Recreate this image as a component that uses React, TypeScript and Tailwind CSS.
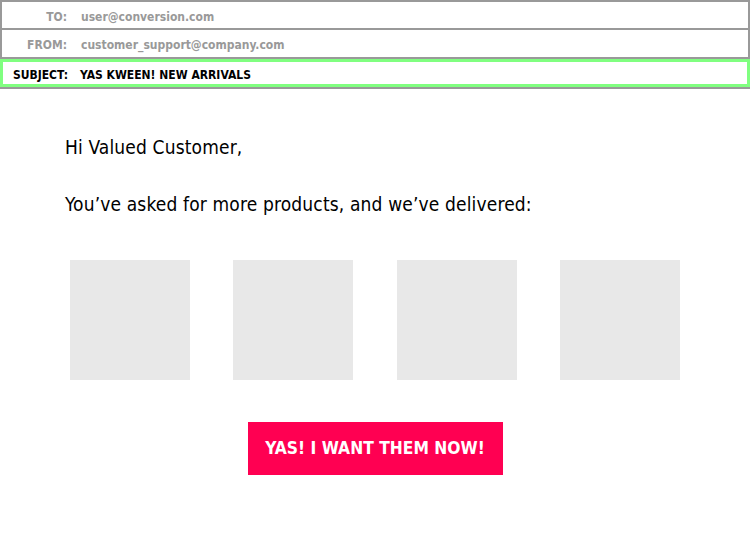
import React from "react";

const font = { fontFamily: '"DejaVu Sans Condensed", "Liberation Sans Narrow", "Liberation Sans", sans-serif' };

export default function App() {
  const products = [0, 1, 2, 3];
  return (
    <div className="w-[750px] h-[550px] bg-white overflow-hidden" style={font}>
      {/* header */}
      <div className="h-[30px] pt-[3px] border-2 border-[#999] flex items-center text-[12px] font-bold">
        <span className="w-[65px] text-right text-[#999]">TO:</span>
        <span className="ml-[14px] text-[#999]">user@conversion.com</span>
      </div>
      <div className="h-[29px] pt-[3px] border-x-2 border-b-2 border-[#999] flex items-center text-[12px] font-bold">
        <span className="w-[65px] text-right text-[#999]">FROM:</span>
        <span className="ml-[14px] text-[#999]">customer_support@company.com</span>
      </div>
      <div className="border-b-2 border-[#999]">
        <div className="h-[28px] pt-[3px] border-[3px] border-[#80ff80] flex items-center text-[12px] font-bold text-black">
          <span className="w-[65px] text-right">SUBJECT:</span>
          <span className="ml-[12px]">YAS KWEEN! NEW ARRIVALS</span>
        </div>
      </div>

      {/* body */}
      <div className="pl-[65px] text-[19px] leading-[24px] tracking-[0.15px] text-black">
        <p className="mt-[46px]">Hi Valued Customer,</p>
        <p className="mt-[33px]">You’ve asked for more products, and we’ve delivered:</p>
      </div>

      <div className="flex pl-[70px] mt-[44px]">
        {products.map((i) => (
          <div
            key={i}
            className={
              "w-[120px] h-[120px] bg-[#e8e8e8] " +
              (i === 0 ? "" : i === 2 ? "ml-[44px]" : "ml-[43px]")
            }
          />
        ))}
      </div>

      <div className="flex justify-center mt-[42px]">
        <button className="w-[255px] h-[53px] bg-[#ff0052] text-white text-[17.3px] font-bold flex items-center justify-center">
          YAS! I WANT THEM NOW!
        </button>
      </div>
    </div>
  );
}
